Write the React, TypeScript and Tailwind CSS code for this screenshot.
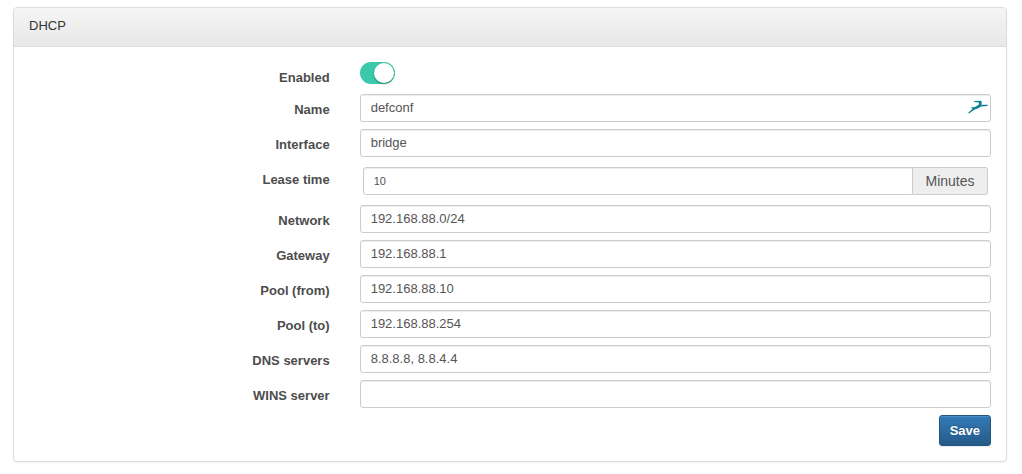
import { useState } from "react";
import type { ReactNode } from "react";

const inputClass =
  "block h-7 w-full rounded-[3px] border border-[#ccc] bg-white px-[10px] pb-[2px] text-[13px] leading-[18px] text-[#555] shadow-[inset_0_1px_1px_rgba(0,0,0,0.075)] outline-none focus:border-[#66afe9]";

function Row({ id, label, children }: { id: string; label: string; children: ReactNode }) {
  return (
    <div className="grid grid-cols-3">
      <div className="px-[15px] pt-[7px] text-right">
        <label htmlFor={id} className="block text-[13px] leading-[18px] font-bold text-[#4d4d4d]">
          {label}
        </label>
      </div>
      <div className="col-span-2 px-[15px]">{children}</div>
    </div>
  );
}

function TextRow({ id, label, value }: { id: string; label: string; value: string }) {
  return (
    <Row id={id} label={label}>
      <div className="pb-[7px]">
        <input id={id} type="text" defaultValue={value} className={inputClass} />
      </div>
    </Row>
  );
}

function BirdIcon() {
  return (
    <svg viewBox="0 0 20 14" className="h-[14px] w-5" aria-hidden="true">
      <path
        fill="#0e8294"
        d="M6.2 1 12.6.8l1.3 1-.6 2.9 6.3.1v1.2l-6.5.5-3.2 2.1-3.2 1L.9 13.6 0 13 4.6 8.8 2.6 7.6 7 6.9l3.6-2.2.5-2.1-4.9-.5Z"
      />
    </svg>
  );
}

export default function App() {
  const [enabled, setEnabled] = useState(true);

  return (
    <main className="bg-white pt-[7px] pr-[15px] pb-3 pl-[13px] font-['Liberation_Sans',Arial,sans-serif]">
      <form
        onSubmit={(e) => e.preventDefault()}
        className="rounded border border-[#ddd] bg-white shadow-[0_1px_2px_rgba(0,0,0,0.05)]"
      >
        <header className="rounded-t-[3px] border-b border-[#ddd] bg-linear-to-b from-[#f5f5f5] to-[#e8e8e8] px-[15px] pt-[9px] pb-[11px]">
          <h1 className="text-[13px] leading-[18px] text-[#333]">DHCP</h1>
        </header>
        <div className="pt-[15px] pb-[15px]">
          <Row id="enabled" label="Enabled">
            <div className="h-8">
              <label className="relative block h-[22px] w-[35px] cursor-pointer">
                <input
                  id="enabled"
                  type="checkbox"
                  checked={enabled}
                  onChange={(e) => setEnabled(e.target.checked)}
                  className="peer absolute inset-0 m-0 size-full cursor-pointer appearance-none rounded-full bg-[#ccc] checked:bg-[#3cc8ab]"
                />
                <span className="pointer-events-none absolute top-px left-px size-5 rounded-full bg-white shadow-[0_1px_2px_rgba(0,0,0,0.35)] peer-checked:left-[14px]" />
              </label>
            </div>
          </Row>
          <Row id="name" label="Name">
            <div className="pb-[7px]">
              <div className="relative">
                <input id="name" type="text" defaultValue="defconf" className={inputClass} />
                <span className="pointer-events-none absolute top-[6px] right-[3px]">
                  <BirdIcon />
                </span>
              </div>
            </div>
          </Row>
          <TextRow id="interface" label="Interface" value="bridge" />
          <Row id="lease" label="Lease time">
            <div className="flex px-[3px] pt-[3px] pb-[10px]">
              <input
                id="lease"
                type="text"
                defaultValue="10"
                className="h-7 min-w-0 flex-1 rounded-l-[3px] border border-[#ccc] bg-white px-[10px] text-[11px] leading-[18px] text-[#555] shadow-[inset_0_1px_1px_rgba(0,0,0,0.075)] outline-none focus:border-[#66afe9]"
              />
              <span className="flex h-7 min-w-[75px] items-center justify-center rounded-r-[3px] border border-l-0 border-[#ccc] bg-[#eee] px-3 text-[14px] leading-[18px] text-[#555]">
                Minutes
              </span>
            </div>
          </Row>
          <TextRow id="network" label="Network" value="192.168.88.0/24" />
          <TextRow id="gateway" label="Gateway" value="192.168.88.1" />
          <TextRow id="pool-from" label="Pool (from)" value="192.168.88.10" />
          <TextRow id="pool-to" label="Pool (to)" value="192.168.88.254" />
          <TextRow id="dns" label="DNS servers" value="8.8.8.8, 8.8.4.4" />
          <TextRow id="wins" label="WINS server" value="" />
          <div className="flex justify-end px-[15px]">
            <button
              type="submit"
              className="h-[31px] cursor-pointer rounded-[3px] border border-[#245580] bg-linear-to-b from-[#337ab7] to-[#265a88] px-[10px] text-[13px] leading-[18px] font-bold text-white shadow-[inset_0_1px_0_rgba(255,255,255,0.15),0_1px_1px_rgba(0,0,0,0.075)] text-shadow-[0_-1px_0_rgba(0,0,0,0.2)]"
            >
              Save
            </button>
          </div>
        </div>
      </form>
    </main>
  );
}
